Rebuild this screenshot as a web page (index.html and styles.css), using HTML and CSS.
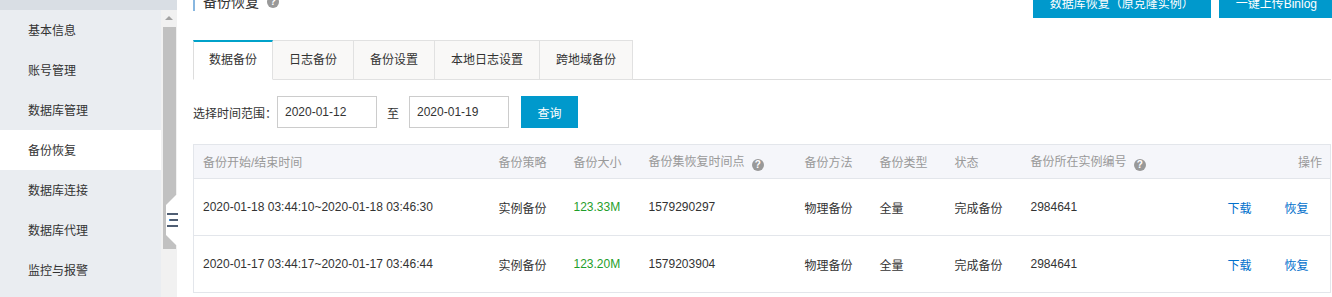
FILE: index.html
```html
<!DOCTYPE html>
<html lang="zh-CN">
<head>
  <meta charset="UTF-8" />
  <title>备份恢复</title>
  <link rel="stylesheet" href="styles.css">
</head>
<body>
  <aside class="side">
    <div class="side-top"></div>
    <div class="side-body">
      <ul class="menu">
        <li>基本信息</li>
        <li>账号管理</li>
        <li>数据库管理</li>
        <li class="on">备份恢复</li>
        <li>数据库连接</li>
        <li>数据库代理</li>
        <li>监控与报警</li>
        <li>日志管理</li>
      </ul>
      <div class="scroll">
        <div class="scroll-up"></div>
        <div class="scroll-thumb"></div>
      </div>
    </div>
    <!-- bouton pour replier le menu -->
    <div class="fold">
      <span></span><span class="mid"></span><span></span>
    </div>
  </aside>

  <main class="content">
    <div class="head">
      <div class="title">备份恢复 <i class="help">?</i></div>
      <div class="actions">
        <button class="btn">数据库恢复（原克隆实例）</button>
        <button class="btn">一键上传Binlog</button>
      </div>
    </div>

    <div class="tabs">
      <div class="tab active">数据备份</div>
      <div class="tab">日志备份</div>
      <div class="tab">备份设置</div>
      <div class="tab">本地日志设置</div>
      <div class="tab">跨地域备份</div>
    </div>

    <div class="filter">
      <span>选择时间范围：</span>
      <input class="date" value="2020-01-12" />
      <span class="to">至</span>
      <input class="date" value="2020-01-19" />
      <button class="btn search">查询</button>
    </div>

    <table class="list">
      <colgroup>
        <col style="width:296px"><col style="width:75px"><col style="width:75px">
        <col style="width:156px"><col style="width:75px"><col style="width:75px">
        <col style="width:76px"><col style="width:197px"><col>
      </colgroup>
      <thead>
        <tr>
          <th>备份开始/结束时间</th>
          <th>备份策略</th>
          <th>备份大小</th>
          <th>备份集恢复时间点 <i class="help">?</i></th>
          <th>备份方法</th>
          <th>备份类型</th>
          <th>状态</th>
          <th>备份所在实例编号 <i class="help">?</i></th>
          <th class="op">操作</th>
        </tr>
      </thead>
      <tbody>
        <tr>
          <td>2020-01-18 03:44:10~2020-01-18 03:46:30</td>
          <td>实例备份</td>
          <td class="size">123.33M</td>
          <td>1579290297</td>
          <td>物理备份</td>
          <td>全量</td>
          <td>完成备份</td>
          <td>2984641</td>
          <td><a href="#">下载</a><a href="#">恢复</a></td>
        </tr>
        <tr>
          <td>2020-01-17 03:44:17~2020-01-17 03:46:44</td>
          <td>实例备份</td>
          <td class="size">123.20M</td>
          <td>1579203904</td>
          <td>物理备份</td>
          <td>全量</td>
          <td>完成备份</td>
          <td>2984641</td>
          <td><a href="#">下载</a><a href="#">恢复</a></td>
        </tr>
      </tbody>
    </table>
  </main>
</body>
</html>
```

FILE: styles.css
```css
html, body {
  height: 100%;
}
body {
  margin: 0;
  display: flex;
  overflow: hidden;
  font-family: "Liberation Sans", "Noto Sans CJK SC", sans-serif;
  font-size: 12px;
  color: #333;
  background: #fff;
}

/* Menu latéral */
.side {
  position: relative;
  width: 177px;
  flex-shrink: 0;
  display: flex;
  flex-direction: column;
  background: #eaedf1;
}
.side-top {
  height: 10px;
  background: #d9dee4;
}
.side-body {
  flex: 1;
  display: flex;
  min-height: 0;
}
.menu {
  list-style: none;
  margin: 0;
  padding: 0;
  width: 161px;
}
.menu li {
  height: 40px;
  line-height: 42px;
  padding-left: 28px;
}
.menu li.on {
  background: #fff;
}
.scroll {
  width: 16px;
  background: #f1f1f1;
  display: flex;
  flex-direction: column;
  align-items: center;
}
.scroll-up {
  height: 17px;
  width: 16px;
  position: relative;
}
.scroll-up::after {
  content: "";
  position: absolute;
  left: 4px;
  top: 6px;
  border: 4px solid transparent;
  border-bottom: 4px solid #a3a3a3;
  border-top: 0;
}
.scroll-thumb {
  width: 13px;
  margin-left: 2px;
  align-self: flex-start;
  height: 222px;
  background: #c1c1c1;
}
.fold {
  position: absolute;
  left: 166px;
  top: 195px;
  width: 12px;
  height: 50px;
  background: #fff;
  clip-path: polygon(10px 0, 12px 0, 12px 50px, 10px 50px, 0 40px, 0 10px);
  display: flex;
  flex-direction: column;
  justify-content: center;
  gap: 4px;
  padding-left: 1px;
  box-sizing: border-box;
}
.fold span {
  display: block;
  height: 2px;
  background: #4f5e73;
}
.fold span.mid {
  margin-left: 2px;
  border-left: 1px solid #3d8fd6;
}

/* Contenu */
.content {
  flex: 1;
  padding: 0 1px 0 16px;
  min-width: 0;
}
.head {
  margin-top: -14px;
  height: 32px;
  display: flex;
  justify-content: space-between;
  align-items: center;
}
.title {
  font-size: 14px;
  border-left: 2px solid #88b7e0;
  padding-left: 8px;
  line-height: 18px;
  display: flex;
  align-items: center;
  gap: 8px;
}
.help {
  display: inline-block;
  width: 12px;
  height: 12px;
  border-radius: 50%;
  background: #999;
  color: #fff;
  font-size: 10px;
  font-style: normal;
  font-weight: bold;
  line-height: 12px;
  text-align: center;
  vertical-align: -2px;
  margin-left: 4px;
}
.title .help {
  margin-left: 0;
}
.actions {
  display: flex;
  gap: 8px;
  margin-right: -3px;
}
.btn {
  height: 32px;
  padding: 0 17px;
  border: 0;
  background: #0099cc;
  color: #fff;
  font-family: inherit;
  font-size: 12px;
  white-space: nowrap;
}

.tabs {
  display: flex;
  margin-top: 22px;
  border-bottom: 1px solid #ddd;
}
.tab {
  height: 40px;
  box-sizing: border-box;
  margin-bottom: -1px;
  padding: 0 16px;
  line-height: 38px;
  background: #f9f8f7;
  border: 1px solid #e1e1e1;
  border-left: 0;
}
.tab:first-child {
  border-left: 1px solid #ddd;
}
.tab.active {
  background: #fff;
  border-top: 2px solid #00a2ca;
  border-bottom-color: #fff;
  line-height: 37px;
  padding: 0 15px;
}

.filter {
  margin-top: 16px;
  height: 32px;
  display: flex;
  align-items: center;
}
.filter > span:first-child {
  width: 84px;
}
.date {
  width: 100px;
  height: 32px;
  box-sizing: border-box;
  border: 1px solid #ccc;
  padding: 0 7px;
  font-family: inherit;
  font-size: 12px;
  color: #333;
}
.to {
  margin: 0 10px;
}
.search {
  margin-left: 12px;
  width: 57px;
  padding: 0;
}

.list {
  margin-top: 16px;
  width: 1138px;
  table-layout: fixed;
  border-collapse: collapse;
  border: 1px solid #e3e6eb;
}
.list th {
  height: 33px;
  background: #f5f6fa;
  color: #999;
  font-weight: normal;
  text-align: left;
  padding: 0 9px;
  white-space: nowrap;
  border-bottom: 1px solid #e3e6eb;
}
.list th.op {
  text-align: right;
  padding-right: 8px;
}
.list td {
  height: 56px;
  padding: 0 9px;
  white-space: nowrap;
  border-bottom: 1px solid #e3e6eb;
}
.list td.size {
  color: #1f9e2a;
}
.list a {
  color: #0070cc;
  text-decoration: none;
  margin-right: 33px;
}
```
